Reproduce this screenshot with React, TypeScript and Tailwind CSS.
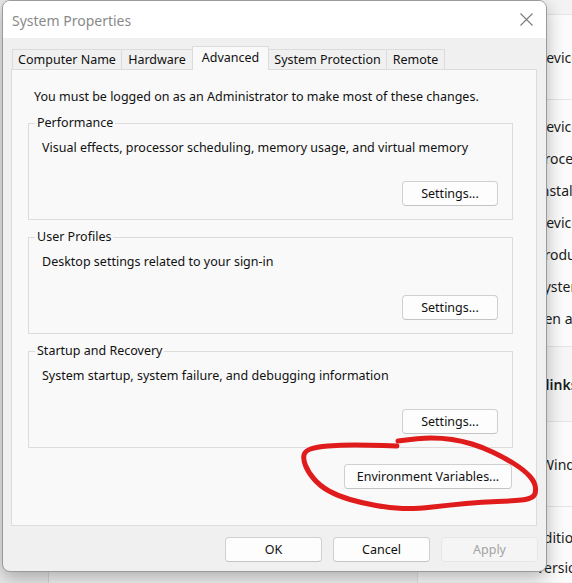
import React, { type FC } from "react";

const tabs = [
  { label: "Computer Name", w: "w-[110px]" },
  { label: "Hardware", w: "w-[72px]" },
  { label: "Advanced", w: "w-[77px]", active: true },
  { label: "System Protection", w: "w-[119px]" },
  { label: "Remote", w: "w-[59px]" },
];

const groups = [
  {
    title: "Performance",
    text: "Visual effects, processor scheduling, memory usage, and virtual memory",
  },
  { title: "User Profiles", text: "Desktop settings related to your sign-in" },
  {
    title: "Startup and Recovery",
    text: "System startup, system failure, and debugging information",
  },
];

const specRows = [
  "Device name",
  "Processor",
  "Installed RAM",
  "Device ID",
  "Product ID",
  "System type",
  "Pen and touch",
];

// freehand red circle around the Environment Variables button
const scribble: [number, number][] = [
  [398, 441], [420, 438], [442, 438], [462, 441], [482, 447], [505, 458],
  [524, 470], [535, 482], [536, 494], [530, 499], [513, 501], [482, 502],
  [450, 505], [415, 509], [390, 508], [362, 503], [338, 496], [320, 486],
  [308, 472], [303, 459], [305, 451], [316, 447], [340, 445], [370, 445],
  [397, 446],
];

const smoothPath = (pts: [number, number][]) => {
  let d = `M${pts[0][0]} ${pts[0][1]}`;
  for (let i = 1; i < pts.length - 1; i++) {
    const [x, y] = pts[i];
    const [nx, ny] = pts[i + 1];
    d += ` Q${x} ${y} ${(x + nx) / 2} ${(y + ny) / 2}`;
  }
  const last = pts[pts.length - 1];
  d += ` L${last[0]} ${last[1]}`;
  return d;
};

const WinButton: FC<{ children: React.ReactNode; className?: string; disabled?: boolean }> = ({
  children,
  className = "",
  disabled,
}) => (
  <button
    type="button"
    className={
      disabled
        ? `h-[25px] rounded-[4px] border border-[#e6e6e6] bg-[#f5f5f5] pt-px text-[12.5px] text-[#a3a3a3] ${className}`
        : `h-[25px] rounded-[4px] border border-[#d0d0d0] border-b-[#c4c4c4] bg-[#fdfdfd] pt-px text-[12.5px] text-[#111] ${className}`
    }
  >
    {children}
  </button>
);

const BackgroundWindow: FC = () => (
  <div className="flex h-full w-full">
    <div className="w-[49px] shrink-0 border-r border-[#d6d6d6] bg-[#e9e9e9]" />
    <div className="w-[369px] shrink-0 border-r border-[#e2e2e2] bg-[#f1f1f1]" />
    <div className="flex flex-1 flex-col bg-[#f3f3f3] pt-[14px] text-[14px] text-[#1b1b1b]">
      <div className="flex h-[86px] items-center border-y border-[#e5e5e5] bg-[#fbfbfb] pl-[118px]">
        <span className="whitespace-nowrap">Device specifications</span>
      </div>
      <div className="flex h-[247px] flex-col border-b border-[#e5e5e5] bg-[#fbfbfb] pt-[10px] pl-[118px]">
        {specRows.map((r) => (
          <div key={r} className="flex h-[32px] items-center whitespace-nowrap">
            {r}
          </div>
        ))}
      </div>
      <div className="flex h-[75px] items-center border-b border-[#e5e5e5] bg-[#f6f6f6] pl-[72px]">
        <span className="whitespace-nowrap font-semibold">Related links</span>
      </div>
      <div className="flex h-[85px] items-center border-b border-[#e5e5e5] bg-[#fbfbfb] pl-[123px]">
        <span className="whitespace-nowrap">Windows specifications</span>
      </div>
      <div className="flex flex-col bg-[#fbfbfb] pl-[118px] pt-[15px]">
        <div className="flex h-[30px] items-center whitespace-nowrap">Edition</div>
        <div className="flex h-[30px] items-center whitespace-nowrap">Version</div>
      </div>
    </div>
  </div>
);

const App: FC = () => {
  return (
    <div className="relative h-[583px] w-[572px] overflow-hidden font-['Noto_Sans','Liberation_Sans',sans-serif]">
      <BackgroundWindow />

      {/* System Properties dialog */}
      <div className="absolute left-[2px] top-0 flex h-[572px] w-[545px] flex-col overflow-hidden rounded-[8px] border border-[#9a9a9a] bg-[#f0f0f0] shadow-[0_6px_18px_rgba(0,0,0,0.28)]">
        <div className="flex h-[37px] shrink-0 items-center justify-between bg-white pl-[9px] pr-[13px]">
          <span className="pt-px text-[14px] text-[#8a8a8a]">System Properties</span>
          <svg width="13" height="13" viewBox="0 0 13 13" aria-hidden="true">
            <path d="M0.5 0.5 L12.5 12.5 M12.5 0.5 L0.5 12.5" stroke="#7b7b7b" strokeWidth="1.1" />
          </svg>
        </div>

        <div className="flex flex-1 flex-col px-[8px] pt-[8px] pb-[9px]">
          {/* tabs */}
          <div className="flex h-[23px] items-end pl-[1px] text-[12.5px] text-[#111]">
            {tabs.map((t, i) =>
              t.active ? (
                <div
                  key={t.label}
                  className={`relative z-10 -mb-px flex h-[24px] ${t.w} items-center justify-center border border-b-0 border-[#dcdcdc] bg-[#f9f9f9] ${i > 0 ? "-ml-px" : ""}`}
                >
                  {t.label}
                </div>
              ) : (
                <div
                  key={t.label}
                  className={`flex h-[20px] ${t.w} items-center justify-center border border-b-0 border-[#dcdcdc] bg-[#f0f0f0] pt-px ${i > 0 ? "-ml-px" : ""}`}
                >
                  {t.label}
                </div>
              ),
            )}
          </div>

          {/* tab pane */}
          <div className="flex h-[457px] w-[526px] flex-col border border-[#dcdcdc] bg-[#f9f9f9] pl-[16px] pr-[23px] pt-[18px] text-[12.5px] text-[#111]">
            <p className="pl-[6px] leading-[18px]">
              You must be logged on as an Administrator to make most of these changes.
            </p>

            {groups.map((g) => (
              <div
                key={g.title}
                className="relative mt-[17px] flex h-[97px] flex-col justify-between border border-[#dcdcdc] pb-[13px] pl-[13px] pr-[14px] pt-[15px] first-of-type:mt-[17px]"
              >
                <span className="absolute -top-[10px] left-[6px] bg-[#f9f9f9] px-[2px] leading-[18px]">
                  {g.title}
                </span>
                <p className="leading-[18px]">{g.text}</p>
                <WinButton className="w-[96px] self-end">Settings...</WinButton>
              </div>
            ))}

            <WinButton className="mr-[1px] mt-[16px] w-[168px] self-end">
              Environment Variables...
            </WinButton>
          </div>

          {/* dialog buttons */}
          <div className="mt-[11px] flex justify-end gap-[11px]">
            <WinButton className="w-[97px]">OK</WinButton>
            <WinButton className="w-[97px]">Cancel</WinButton>
            <WinButton className="w-[97px]" disabled>
              Apply
            </WinButton>
          </div>
        </div>
      </div>

      <svg
        className="pointer-events-none absolute inset-0"
        width="572"
        height="583"
        viewBox="0 0 572 583"
        aria-hidden="true"
      >
        <path
          d={smoothPath(scribble)}
          fill="none"
          stroke="#e01b1b"
          strokeWidth="5"
          strokeLinecap="round"
          strokeLinejoin="round"
        />
      </svg>
    </div>
  );
};

export default App;
